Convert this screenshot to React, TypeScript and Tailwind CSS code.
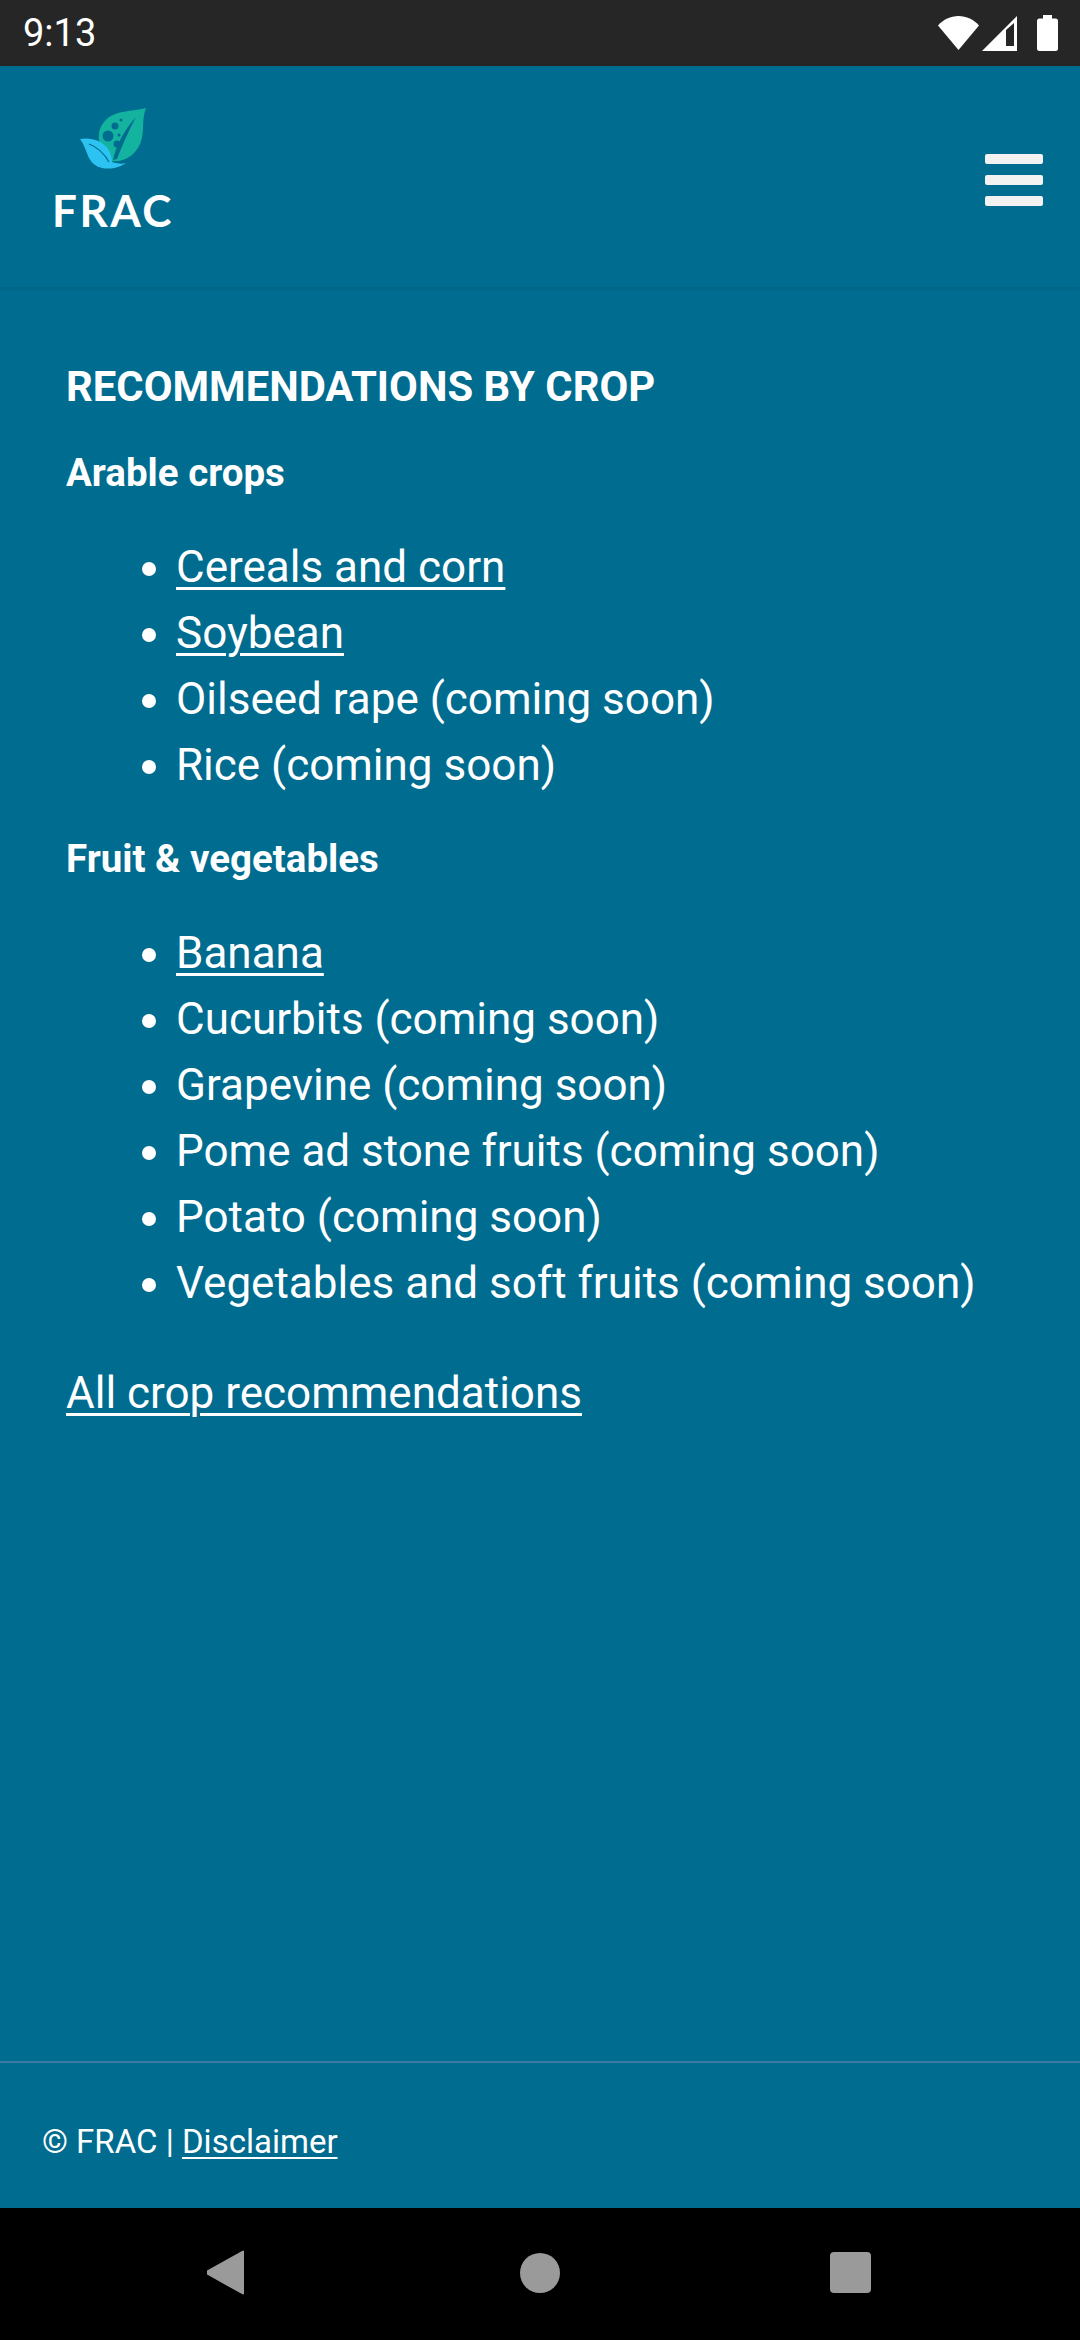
import React from 'react'

const arable = [
  { label: 'Cereals and corn', link: true },
  { label: 'Soybean', link: true },
  { label: 'Oilseed rape (coming soon)' },
  { label: 'Rice (coming soon)' },
]

const fruit = [
  { label: 'Banana', link: true },
  { label: 'Cucurbits (coming soon)' },
  { label: 'Grapevine (coming soon)' },
  { label: 'Pome ad stone fruits (coming soon)' },
  { label: 'Potato (coming soon)' },
  { label: 'Vegetables and soft fruits (coming soon)' },
]

type Crop = { label: string; link?: boolean }

const CropList = ({ items }: { items: Crop[] }) => (
  <ul className="list-disc pl-[110px] text-[44px] leading-[66px]">
    {items.map((item) => (
      <li key={item.label}>
        {item.link ? <a className="underline underline-offset-[5px] decoration-[3px]">{item.label}</a> : item.label}
      </li>
    ))}
  </ul>
)

const Logo = () => (
  <svg width="66" height="62" viewBox="0 0 66 62" className="ml-[28px]">
    <path d="M66 0C50 4 34 2 24 14C18 21 18 30 20 36C26 40 30 47 30 53C44 55 58 47 62 30C64 20 62 10 66 0Z" fill="#14b3a0" />
    <path d="M33 52C36 38 44 22 56 9C48 24 42 38 37 51Z" fill="#006c8f" />
    <circle cx="28" cy="28" r="5.5" fill="#006c8f" />
    <circle cx="35" cy="18" r="3.5" fill="#006c8f" />
    <circle cx="37" cy="36" r="3.5" fill="#006c8f" />
    <circle cx="39" cy="27" r="1.5" fill="#006c8f" />
    <circle cx="41" cy="12" r="1.5" fill="#006c8f" />
    <path d="M0 31C10 29 22 32 28 41C31 46 32 50 32 54C38 56 43 56 46 55C38 61 24 63 15 57C7 52 6 38 0 31Z" fill="#2cc3f2" />
    <path d="M9 36C17 39 24 45 29 54" stroke="#006c8f" strokeWidth="1.2" fill="none" />
  </svg>
)

export default function App() {
  return (
    <div className="flex h-[2340px] flex-col bg-[#006c8f] font-['Roboto',sans-serif] text-white">
      <div className="flex h-[66px] items-center justify-between bg-[#262626] pl-[23px] pr-[22px]">
        <span className="text-[38px] leading-none">9:13</span>
        <div className="flex items-center">
          <svg width="41" height="34" viewBox="0 0 41 34">
            <path d="M0 9.500C5.500 3.500 12.500 0 20.500 0S35.500 3.500 41 9.500L20.500 34Z" fill="#fff" />
          </svg>
          <svg width="35" height="35" viewBox="0 0 35 35" className="ml-[3px]">
            <path d="M35 0V35H0Z" fill="#fff" />
            <path d="M24 14V30H32V7Z" fill="#262626" />
          </svg>
          <svg width="21" height="36" viewBox="0 0 21 36" className="ml-[20px]">
            <path d="M6 0H15V3.500H18.500A2.500 2.500 0 0 1 21 6V33.500A2.500 2.500 0 0 1 18.500 36H2.500A2.500 2.500 0 0 1 0 33.500V6A2.500 2.500 0 0 1 2.500 3.500H6Z" fill="#fff" />
          </svg>
        </div>
      </div>

      <header className="flex h-[221px] items-center justify-between pl-[52px] pr-[37px] shadow-[0_1px_4px_rgba(0,0,0,0.12)]">
        <div className="flex flex-col pb-[13px]">
          <Logo />
          <span className="mt-[18px] font-['Lato',sans-serif] text-[44px] font-bold leading-[44px] tracking-[2.500px]">FRAC</span>
        </div>
        <div className="mt-[6px] flex w-[58px] flex-col gap-[11px]">
          <span className="h-[10px] rounded-[2px] bg-[#f2f2f2]" />
          <span className="h-[10px] rounded-[2px] bg-[#f2f2f2]" />
          <span className="h-[10px] rounded-[2px] bg-[#f2f2f2]" />
        </div>
      </header>

      <main className="flex-1 px-[66px] pt-[74px]">
        <h2 className="text-[41.800px] font-bold leading-[52px]">RECOMMENDATIONS BY CROP</h2>
        <h3 className="mt-[34.500px] text-[38.500px] font-bold leading-[50px]">Arable crops</h3>
        <div className="mt-[36px]">
          <CropList items={arable} />
        </div>
        <h3 className="mt-[36px] text-[38.500px] font-bold leading-[50px]">Fruit &amp; vegetables</h3>
        <div className="mt-[36px]">
          <CropList items={fruit} />
        </div>
        <a className="mt-[44px] block text-[44px] leading-[66px] underline underline-offset-[5px] decoration-[3px]">All crop recommendations</a>
      </main>

      <footer className="flex h-[147px] items-center border-t-2 border-[#3a7ba6] pl-[42px] pt-[12px] text-[33px]">
        <span>
          © FRAC | <a className="underline underline-offset-[4px] decoration-[2px]">Disclaimer</a>
        </span>
      </footer>

      <nav className="flex h-[132px] shrink-0 items-center bg-black pb-[3px]">
        <svg width="38" height="45" viewBox="0 0 38 45" className="ml-[207px]">
          <path d="M36 1.500V43.500L1 24Q-0.500 22.500 1 21Z" fill="#9a9a9a" stroke="#9a9a9a" strokeWidth="2" strokeLinejoin="round" />
        </svg>
        <span className="ml-[275px] h-[40px] w-[40px] rounded-full bg-[#9a9a9a]" />
        <span className="ml-[270px] h-[41px] w-[41px] rounded-[4px] bg-[#9a9a9a]" />
      </nav>
    </div>
  )
}
